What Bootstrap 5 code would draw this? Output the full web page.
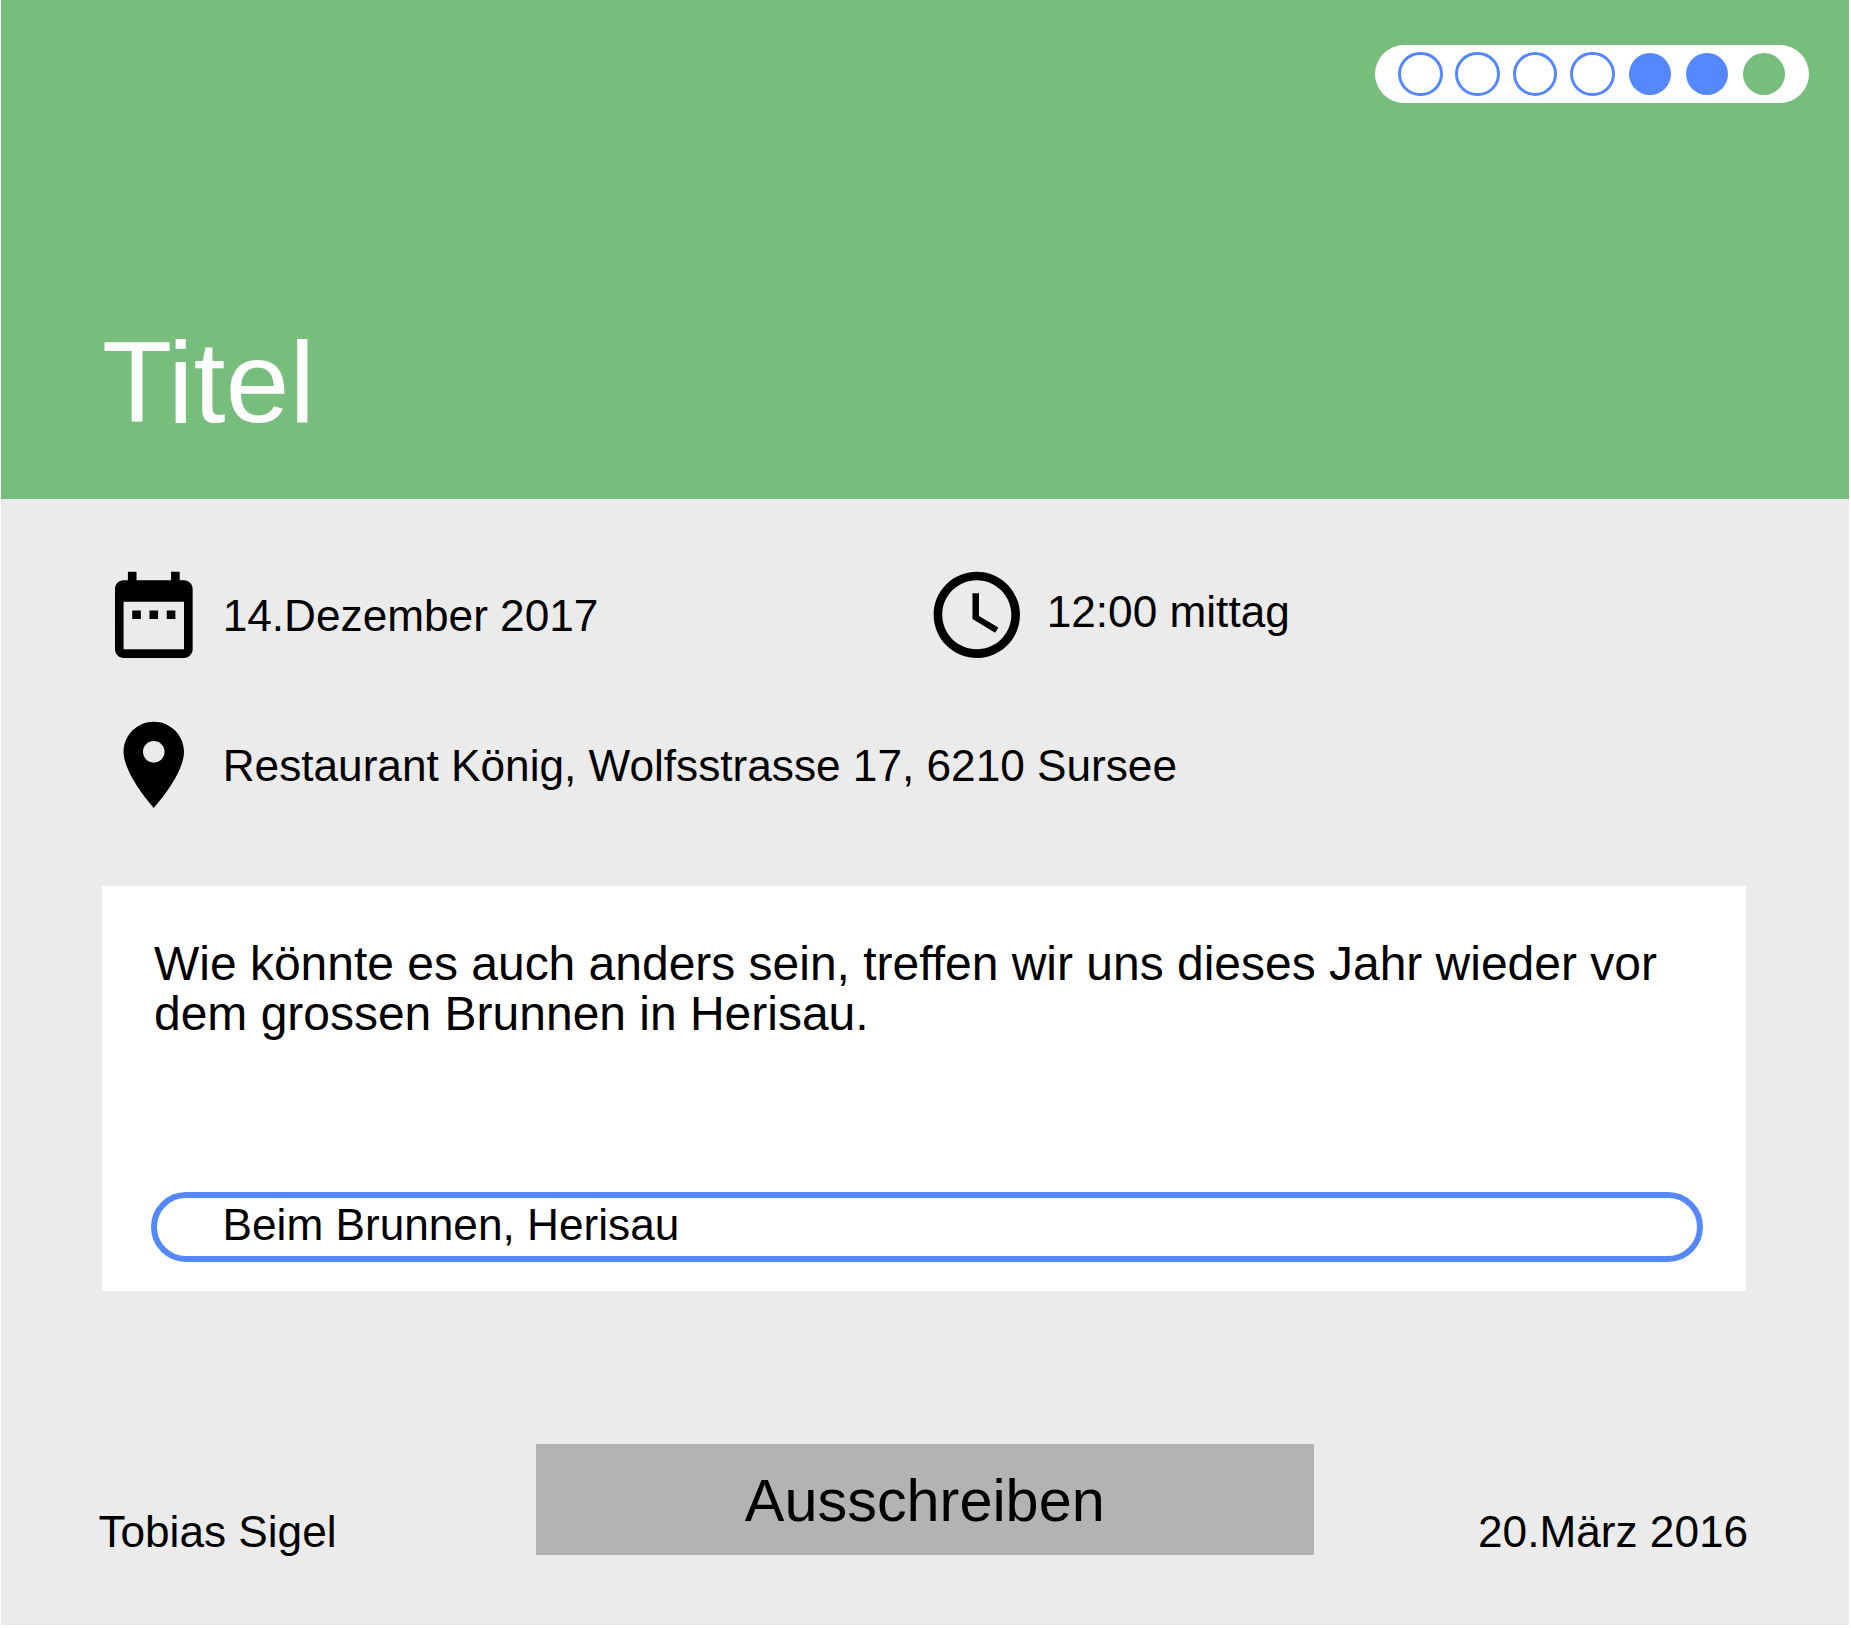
<!DOCTYPE html>
<html lang="de">
<head>
<meta charset="utf-8">
<meta name="viewport" content="width=device-width, initial-scale=1">
<title>Titel</title>
<link href="https://cdn.jsdelivr.net/npm/bootstrap@5.3.0/dist/css/bootstrap.min.css" rel="stylesheet">
<style>
  body { font-family: "Liberation Sans", Arial, sans-serif; font-size: 44.18px; line-height: 1; color: #000; background: #fff; }
  .event-page { height: 1625px; margin: 0 2px 0 1px; background: #ebebeb; }
  .event-head { height: 499.3px; padding: 45px 39.6px 59.6px 101px; background: #77be7d; }
  .event-title { font-size: 115px; line-height: 116px; font-weight: 400; }
  .steps { width: 434.4px; height: 57.6px; padding-left: 23px; gap: 12.73px; }
  .step-dot { width: 44.6px; height: 44.6px; border: 3px solid #5588ff; border-radius: 50%; }
  .step-dot.done, .step-dot.current { width: 42px; height: 42px; margin: 0 1.3px; border: 0; background: #5588ff; }
  .step-dot.current { background: #77be7d; }
  .event-body { padding: 63.7px 103px 0 101px; }
  .info-list { gap: 46.8px; }
  .info-item { gap: 17.1px; }
  .info-item svg { width: 103.6px; height: 103.6px; flex: none; }
  .info-label { padding-top: 2px; }
  .info-clock { padding-left: 1px; }
  .info-time { padding: 0 0 6px 1px; }
  .message-box { height: 404.7px; margin-top: 69px; padding: 52.6px 43px 28.4px 49px; }
  .message-text { font-size: 47.98px; line-height: 50px; padding-left: 3px; font-variant-ligatures: none; }
  .place-field { height: 70.3px; border: 6px solid #5588ff; padding: 0 65.6px 5px; }
  .event-foot { padding: 153.3px 100.9px 0 97.4px; }
  .foot-author { width: 437.4px; padding-bottom: 1.5px; }
  .foot-date { padding-bottom: 1.5px; }
  .publish { width: 778px; height: 111.3px; font-size: 59.4px; line-height: 1; --bs-btn-bg: #b3b3b3; --bs-btn-color: #000; --bs-btn-hover-bg: #a6a6a6; --bs-btn-hover-color: #000; }
  .publish-label { padding-top: 2px; }
</style>
<script src="https://cdn.jsdelivr.net/npm/bootstrap@5.3.0/dist/js/bootstrap.bundle.min.js"></script>
</head>
<body>
<div class="event-page d-flex flex-column">
  <header class="event-head d-flex flex-column justify-content-between">
    <div class="steps d-flex align-items-center align-self-end bg-white rounded-pill">
      <span class="step-dot"></span>
      <span class="step-dot"></span>
      <span class="step-dot"></span>
      <span class="step-dot"></span>
      <span class="step-dot done"></span>
      <span class="step-dot done"></span>
      <span class="step-dot current"></span>
    </div>
    <h1 class="event-title text-white mb-0">Titel</h1>
  </header>

  <main class="event-body">
    <div class="info-list d-flex flex-column">
      <div class="row g-0">
        <div class="col-6 info-item d-flex align-items-center">
          <svg viewBox="0 0 24 24" aria-hidden="true"><path d="M9 11H7v2h2v-2zm4 0h-2v2h2v-2zm4 0h-2v2h2v-2zm2-7h-1V2h-2v2H8V2H6v2H5c-1.11 0-1.99.9-1.99 2L3 20c0 1.1.89 2 2 2h14c1.1 0 2-.9 2-2V6c0-1.1-.9-2-2-2zm0 16H5V9h14v11z"/></svg>
          <span class="info-label">14.Dezember 2017</span>
        </div>
        <div class="col-6 info-item info-clock d-flex align-items-center">
          <svg viewBox="0 0 24 24" aria-hidden="true"><path d="M11.99 2C6.47 2 2 6.48 2 12s4.47 10 9.99 10C17.52 22 22 17.52 22 12S17.52 2 11.99 2zM12 20c-4.42 0-8-3.58-8-8s3.58-8 8-8 8 3.58 8 8-3.58 8-8 8zm.5-13H11v6l5.25 3.15.75-1.23-4.5-2.67z"/></svg>
          <span class="info-time">12:00 mittag</span>
        </div>
      </div>
      <div class="info-item d-flex align-items-center">
        <svg viewBox="0 0 24 24" aria-hidden="true"><path d="M12 2C8.13 2 5 5.13 5 9c0 5.25 7 13 7 13s7-7.75 7-13c0-3.87-3.13-7-7-7zm0 9.5c-1.38 0-2.5-1.12-2.5-2.5s1.12-2.5 2.5-2.5 2.5 1.12 2.5 2.5-1.12 2.5-2.5 2.5z"/></svg>
        <span class="info-label">Restaurant König, Wolfsstrasse 17, 6210 Sursee</span>
      </div>
    </div>

    <section class="message-box bg-white d-flex flex-column justify-content-between">
      <p class="message-text mb-0">Wie könnte es auch anders sein, treffen wir uns dieses Jahr wieder vor dem grossen Brunnen in Herisau.</p>
      <div class="place-field d-flex align-items-center rounded-pill">Beim Brunnen, Herisau</div>
    </section>
  </main>

  <footer class="event-foot d-flex align-items-end">
    <div class="foot-author">Tobias Sigel</div>
    <button type="button" class="publish btn rounded-0 border-0 p-0"><span class="publish-label d-block">Ausschreiben</span></button>
    <div class="foot-date ms-auto">20.März 2016</div>
  </footer>
</div>
</body>
</html>
